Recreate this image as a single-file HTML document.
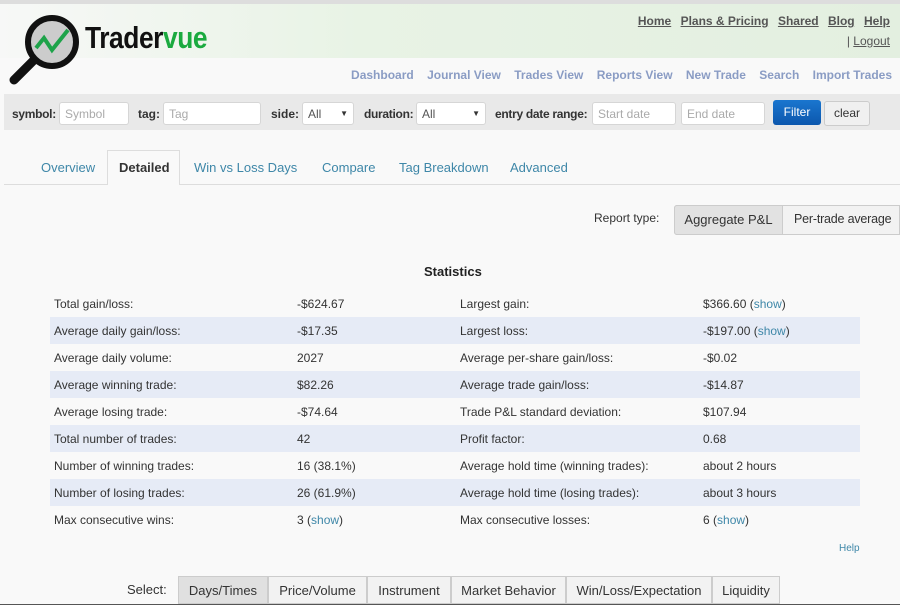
<!DOCTYPE html>
<html><head><style>
*{margin:0;padding:0;box-sizing:border-box}
body{width:900px;height:608px;overflow:hidden;background:#f9f9f9;font-family:"Liberation Sans",sans-serif;position:relative;font-size:12px;color:#333}
.a{position:absolute;white-space:nowrap}
.hdr{position:absolute;left:0;top:0;width:900px;height:58px;background:linear-gradient(90deg,#f7f8f7 0%,#e8f3e5 40%,#e3efe0 100%);border-top:4px solid #ddd}
.top a{color:#555;text-decoration:underline;font-weight:bold;font-size:12px;margin-left:6px}
.nav span{color:#8a9cc4;font-weight:bold;font-size:12px;margin-left:10px}
.bar{position:absolute;left:4px;top:94px;width:896px;height:36px;background:#e9e9e9}
.lbl{font-weight:bold;font-size:12px;color:#333;top:107px}
.inp{position:absolute;top:102px;height:23px;background:#fff;border:1px solid #d6d6d6;border-radius:3px;color:#aaa;font-size:12px;padding:4px 5px}
.tab{font-size:13px;color:#3e87a8;top:160px}
.tbl{position:absolute;left:50px;width:810px;height:27px}
.tbl.s{background:#e6ebf6}
.tbl span{position:absolute;top:7px;font-size:12px;color:#333}
.sh{color:#3e87a8;font-weight:normal}
.seg{position:absolute;top:576px;height:28px;border:1px solid #ccc;background:#f2f2f2;font-size:13px;color:#333;padding:6px 0;text-align:center}
</style></head><body>
<div class="hdr"></div>
<svg class="a" style="left:8px;top:10px" width="80" height="76" viewBox="0 0 80 76">
<circle cx="44" cy="32" r="24" fill="#ccc" stroke="#111" stroke-width="6"/>
<line x1="26" y1="50" x2="6" y2="70" stroke="#111" stroke-width="9" stroke-linecap="round"/>
<polyline points="28,38 36,28 44,40 60,20" fill="none" stroke="#1ea34a" stroke-width="4"/>
</svg>
<div class="a" style="left:85px;top:20px;font-size:31px;font-weight:bold;color:#111;letter-spacing:-0.5px;transform:scaleX(0.85);transform-origin:left">Trader<span style="color:#1aaa3f">vue</span></div>
<div class="a top" style="right:10px;top:14px"><a>Home</a> <a>Plans &amp; Pricing</a> <a>Shared</a> <a>Blog</a> <a>Help</a></div>
<div class="a" style="right:10px;top:34px;font-size:12px;color:#555">| <u>Logout</u></div>
<div class="a nav" style="right:8px;top:68px"><span>Dashboard</span> <span>Journal View</span> <span>Trades View</span> <span>Reports View</span> <span>New Trade</span> <span>Search</span> <span>Import Trades</span></div>
<div class="bar"></div>
<div class="a lbl" style="left:12px;letter-spacing:-0.3px">symbol:</div><div class="inp" style="left:59px;width:70px">Symbol</div>
<div class="a lbl" style="left:138px">tag:</div><div class="inp" style="left:163px;width:98px">Tag</div>
<div class="a lbl" style="left:271px">side:</div><div class="inp" style="left:302px;width:52px;color:#555">All<span style="float:right;font-size:8px;color:#333;margin-top:2px">▼</span></div>
<div class="a lbl" style="left:364px;letter-spacing:-0.3px">duration:</div><div class="inp" style="left:416px;width:70px;color:#555">All<span style="float:right;font-size:8px;color:#333;margin-top:2px">▼</span></div>
<div class="a lbl" style="left:495px;letter-spacing:-0.3px">entry date range:</div>
<div class="inp" style="left:592px;width:84px">Start date</div><div class="inp" style="left:681px;width:84px">End date</div>
<div class="a" style="left:773px;top:100px;width:48px;height:25px;background:linear-gradient(#1a76cf,#0c57ad);border-radius:3px;color:#fff;font-size:12px;text-align:center;line-height:25px">Filter</div>
<div class="a" style="left:824px;top:101px;width:46px;height:25px;background:#f0f0f0;border:1px solid #ccc;border-radius:3px;color:#333;font-size:12px;text-align:center;line-height:23px">clear</div>
<div class="a" style="left:4px;top:184px;width:896px;height:1px;background:#ddd"></div>
<div class="a" style="left:107px;top:150px;width:73px;height:35px;background:#f9f9f9;border:1px solid #ddd;border-bottom:none"></div>
<div class="a tab" style="left:41px">Overview</div>
<div class="a tab" style="left:119px;color:#333;font-weight:bold">Detailed</div>
<div class="a tab" style="left:194px">Win vs Loss Days</div>
<div class="a tab" style="left:322px">Compare</div>
<div class="a tab" style="left:399px">Tag Breakdown</div>
<div class="a tab" style="left:510px">Advanced</div>
<div class="a" style="left:594px;top:211px;font-size:12px">Report type:</div>
<div class="a" style="left:674px;top:205px;width:226px;height:30px;border:1px solid #ccc;border-radius:3px 0 0 3px;background:#f2f2f2"></div>
<div class="a" style="left:674px;top:205px;width:109px;height:30px;border:1px solid #ccc;border-radius:3px 0 0 3px;background:#e2e2e2;font-size:13px;text-align:center;line-height:28px">Aggregate P&amp;L</div>
<div class="a" style="left:794px;top:212px;font-size:12.5px;letter-spacing:-0.2px">Per-trade average</div>
<div class="a" style="left:424px;top:264px;font-size:13px;font-weight:bold;color:#222">Statistics</div>

<div class="tbl" style="top:290px"><span style="left:4px">Total gain/loss:</span><span style="left:247px">-$624.67</span><span style="left:410px">Largest gain:</span><span style="left:653px">$366.60 (<b class="sh">show</b>)</span></div>
<div class="tbl s" style="top:317px"><span style="left:4px">Average daily gain/loss:</span><span style="left:247px">-$17.35</span><span style="left:410px">Largest loss:</span><span style="left:653px">-$197.00 (<b class="sh">show</b>)</span></div>
<div class="tbl" style="top:344px"><span style="left:4px">Average daily volume:</span><span style="left:247px">2027</span><span style="left:410px">Average per-share gain/loss:</span><span style="left:653px">-$0.02</span></div>
<div class="tbl s" style="top:371px"><span style="left:4px">Average winning trade:</span><span style="left:247px">$82.26</span><span style="left:410px">Average trade gain/loss:</span><span style="left:653px">-$14.87</span></div>
<div class="tbl" style="top:398px"><span style="left:4px">Average losing trade:</span><span style="left:247px">-$74.64</span><span style="left:410px">Trade P&amp;L standard deviation:</span><span style="left:653px">$107.94</span></div>
<div class="tbl s" style="top:425px"><span style="left:4px">Total number of trades:</span><span style="left:247px">42</span><span style="left:410px">Profit factor:</span><span style="left:653px">0.68</span></div>
<div class="tbl" style="top:452px"><span style="left:4px">Number of winning trades:</span><span style="left:247px">16 (38.1%)</span><span style="left:410px">Average hold time (winning trades):</span><span style="left:653px">about 2 hours</span></div>
<div class="tbl s" style="top:479px"><span style="left:4px">Number of losing trades:</span><span style="left:247px">26 (61.9%)</span><span style="left:410px">Average hold time (losing trades):</span><span style="left:653px">about 3 hours</span></div>
<div class="tbl" style="top:506px"><span style="left:4px">Max consecutive wins:</span><span style="left:247px">3 (<b class="sh">show</b>)</span><span style="left:410px">Max consecutive losses:</span><span style="left:653px">6 (<b class="sh">show</b>)</span></div>

<div class="a" style="left:839px;top:543px;font-size:10px;color:#3e87a8">Help</div>
<div class="a" style="left:127px;top:582px;font-size:13px">Select:</div>
<div class="seg" style="left:178px;width:90px;background:#e0e0e0">Days/Times</div>
<div class="seg" style="left:268px;width:99px">Price/Volume</div>
<div class="seg" style="left:367px;width:84px">Instrument</div>
<div class="seg" style="left:451px;width:115px">Market Behavior</div>
<div class="seg" style="left:566px;width:146px">Win/Loss/Expectation</div>
<div class="seg" style="left:712px;width:68px">Liquidity</div>
<div class="a" style="left:0;top:604px;width:900px;height:4px;background:#fff;border-top:1px solid #555"></div>
</body></html>
